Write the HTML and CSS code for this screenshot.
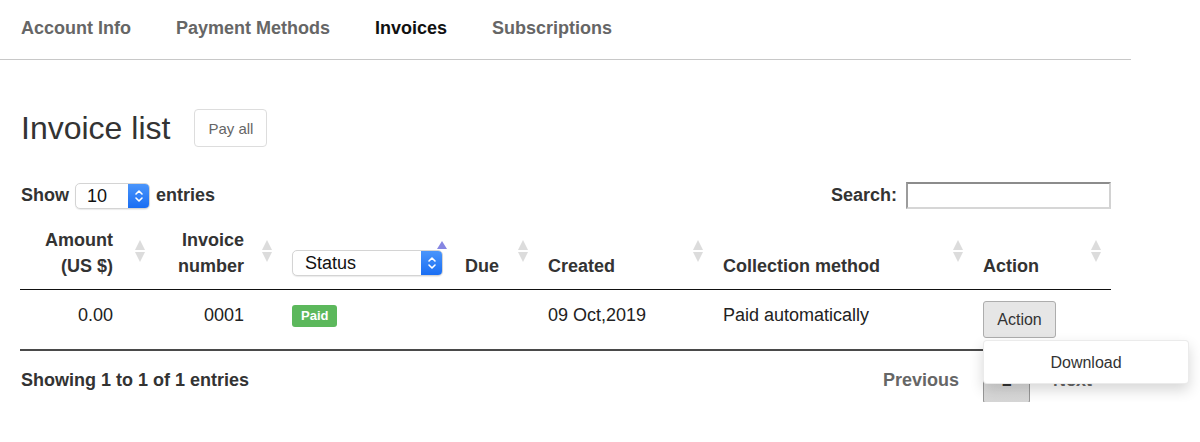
FILE: index.html
```html
<!DOCTYPE html>
<html lang="en">
<head>
<meta charset="utf-8">
<title>Invoices</title>
<link rel="stylesheet" href="styles.css">
</head>
<body>
<nav class="tabs">
  <a class="tab">Account Info</a>
  <a class="tab">Payment Methods</a>
  <a class="tab active">Invoices</a>
  <a class="tab">Subscriptions</a>
</nav>

<main class="content">
  <div class="title-row">
    <h1 class="title">Invoice list</h1>
    <button class="btn-light">Pay all</button>
  </div>

  <div class="controls">
    <div class="length">
      <span class="label">Show</span>
      <span class="fake-select small">
        <span class="fake-value">10</span>
        <span class="stepper">
          <svg width="10" height="16" viewBox="0 0 10 16"><path d="M2 6 L5 3 L8 6" fill="none" stroke="#fff" stroke-width="1.6" stroke-linecap="round" stroke-linejoin="round"/><path d="M2 10 L5 13 L8 10" fill="none" stroke="#fff" stroke-width="1.6" stroke-linecap="round" stroke-linejoin="round"/></svg>
        </span>
      </span>
      <span class="label">entries</span>
    </div>
    <div class="search">
      <span class="label">Search:</span>
      <span class="search-input"></span>
    </div>
  </div>

  <table class="invoices">
    <colgroup>
      <col class="c1"><col class="c2"><col class="c3"><col class="c4"><col class="c5"><col class="c6"><col class="c7">
    </colgroup>
    <thead>
      <tr>
        <th class="num n1 sortable">Amount<br>(US $)</th>
        <th class="num n2 sortable">Invoice<br>number</th>
        <th class="status-th sorted">
          <span class="fake-select status">
            <span class="fake-value">Status</span>
            <span class="stepper">
              <svg width="10" height="16" viewBox="0 0 10 16"><path d="M2 6 L5 3 L8 6" fill="none" stroke="#fff" stroke-width="1.6" stroke-linecap="round" stroke-linejoin="round"/><path d="M2 10 L5 13 L8 10" fill="none" stroke="#fff" stroke-width="1.6" stroke-linecap="round" stroke-linejoin="round"/></svg>
            </span>
          </span>
        </th>
        <th class="sortable">Due</th>
        <th class="sortable">Created</th>
        <th class="sortable">Collection method</th>
        <th class="sortable">Action</th>
      </tr>
    </thead>
    <tbody>
      <tr>
        <td class="num n1">0.00</td>
        <td class="num n2">0001</td>
        <td><span class="badge">Paid</span></td>
        <td></td>
        <td>09 Oct,2019</td>
        <td>Paid automatically</td>
        <td>
          <div class="action-wrap">
            <button class="btn-action">Action</button>
            <div class="dropdown">Download</div>
          </div>
        </td>
      </tr>
    </tbody>
  </table>

  <div class="footer">
    <span class="label">Showing 1 to 1 of 1 entries</span>
    <div class="pager">
      <span class="page-link prev">Previous</span>
      <span class="page-btn">1</span>
      <span class="page-link next">Next</span>
    </div>
  </div>
</main>
</body>
</html>
```

FILE: styles.css
```css
* { box-sizing: border-box; }

body {
  margin: 0;
  font-family: "Liberation Sans", Arial, Helvetica, sans-serif;
  font-size: 18px;
  color: #333;
  background: #fff;
}

.tabs {
  display: flex;
  gap: 45px;
  width: 1131px;
  height: 60px;
  padding: 16px 0 0 21px;
  border-bottom: 1px solid #c8c8c8;
}

.tab {
  font-weight: bold;
  font-size: 18px;
  line-height: 24px;
  color: #666;
}

.tab.active { color: #111; }

.content { padding: 0 20px; }

.title-row {
  display: flex;
  align-items: center;
  gap: 24px;
  margin-top: 49px;
  height: 38px;
}

.title {
  margin: 0 0 0 1px;
  font-size: 32px;
  font-weight: normal;
  line-height: 38px;
  color: #333;
}

.btn-light {
  height: 38px;
  padding: 0 13px;
  font-family: inherit;
  font-size: 15px;
  color: #666;
  background: #fff;
  border: 1px solid #ddd;
  border-radius: 4px;
}

.controls {
  display: flex;
  justify-content: space-between;
  align-items: center;
  width: 1091px;
  margin-top: 35px;
  height: 27px;
}

.length, .search {
  display: flex;
  align-items: center;
  gap: 6px;
  padding-left: 1px;
}

.search { gap: 9px; padding-left: 0; }

.label { font-weight: bold; color: #333; }

.fake-select {
  display: flex;
  height: 26px;
  border: 1px solid #d4d4d4;
  border-radius: 5px;
  background: #fff;
  box-shadow: 0 1px 1px rgba(0,0,0,0.08);
  overflow: hidden;
  align-items: stretch;
}

.fake-select.small { width: 75px; }
.fake-select.status { width: 151px; }

.fake-value {
  flex: 1;
  line-height: 25px;
  padding-left: 11px;
  font-weight: normal;
  color: #111;
  text-align: left;
}

.fake-select.status .fake-value { padding-left: 12px; }

.stepper {
  width: 21px;
  display: flex;
  align-items: center;
  justify-content: center;
  background: linear-gradient(#4a95fb, #1a6ef3);
}

.search-input {
  display: block;
  width: 205px;
  height: 27px;
  border-style: solid;
  border-width: 2px;
  border-color: #8c8c8c #d2d2d2 #d6d6d6 #9c9c9c;
  background: #fff;
}

.invoices {
  margin-top: 8px;
  width: 1091px;
  table-layout: fixed;
  border-collapse: collapse;
  border-spacing: 0;
}

.c1 { width: 135px; }
.c2 { width: 127px; }
.c3 { width: 173px; }
.c4 { width: 83px; }
.c5 { width: 175px; }
.c6 { width: 260px; }
.c7 { width: 138px; }

.invoices th {
  position: relative;
  padding: 10px 10px 10px 10px;
  line-height: 26px;
  font-weight: bold;
  text-align: left;
  vertical-align: bottom;
  border-bottom: 1px solid #111;
  color: #333;
}

.invoices th.num, .invoices td.num { text-align: right; }
.invoices .n1 { padding-right: 42px; }
.invoices .n2 { padding-right: 38px; }

.invoices th.status-th { padding-bottom: 13px; }

.sortable::before,
.sortable::after {
  content: "";
  position: absolute;
  right: 10px;
  width: 0;
  height: 0;
  border-left: 5px solid transparent;
  border-right: 5px solid transparent;
}

.sortable::before {
  top: 23px;
  border-bottom: 10px solid #dcdcdc;
}

.sortable::after {
  top: 35px;
  border-top: 10px solid #dcdcdc;
}

.sorted::before {
  content: "";
  position: absolute;
  right: 8px;
  top: 24px;
  border-left: 5px solid transparent;
  border-right: 5px solid transparent;
  border-bottom: 8px solid #8686e2;
}

.invoices td {
  padding: 12px 10px 11px;
  line-height: 26px;
  vertical-align: top;
  border-bottom: 2px solid #4a4a4a;
  color: #222;
}

.badge {
  display: inline-block;
  margin-top: 3px;
  height: 22px;
  padding: 0 9px;
  font-size: 13px;
  line-height: 22px;
  font-weight: bold;
  color: #fff;
  background: #5cb85c;
  border-radius: 3px;
  vertical-align: top;
}

.action-wrap { position: relative; margin-top: -1px; }

.btn-action {
  display: block;
  height: 37px;
  width: 73px;
  padding: 0;
  font-family: inherit;
  font-size: 16px;
  color: #333;
  background: #e6e6e6;
  border: 1px solid #adadad;
  border-radius: 3px;
}

.dropdown {
  position: absolute;
  top: 39px;
  left: 0;
  z-index: 10;
  width: 206px;
  height: 44px;
  line-height: 44px;
  text-align: center;
  font-size: 16px;
  color: #333;
  background: #fff;
  border: 1px solid rgba(0,0,0,0.08);
  border-radius: 4px;
  box-shadow: 0 6px 14px rgba(0,0,0,0.16);
}

.footer {
  display: flex;
  justify-content: space-between;
  align-items: center;
  width: 1091px;
  margin-top: 6px;
  height: 45px;
  padding: 1px 0 0 1px;
}

.pager {
  display: flex;
  align-items: center;
  padding-right: 19px;
}

.page-link {
  font-weight: bold;
  color: #666;
}

.prev { margin-right: 24px; }
.next { margin-left: 23px; }

.page-btn {
  width: 47px;
  height: 45px;
  line-height: 43px;
  text-align: center;
  font-weight: bold;
  color: #333;
  border: 1px solid #979797;
  border-radius: 2px;
  background: linear-gradient(#e4e4e4, #d6d6d6);
}
```
